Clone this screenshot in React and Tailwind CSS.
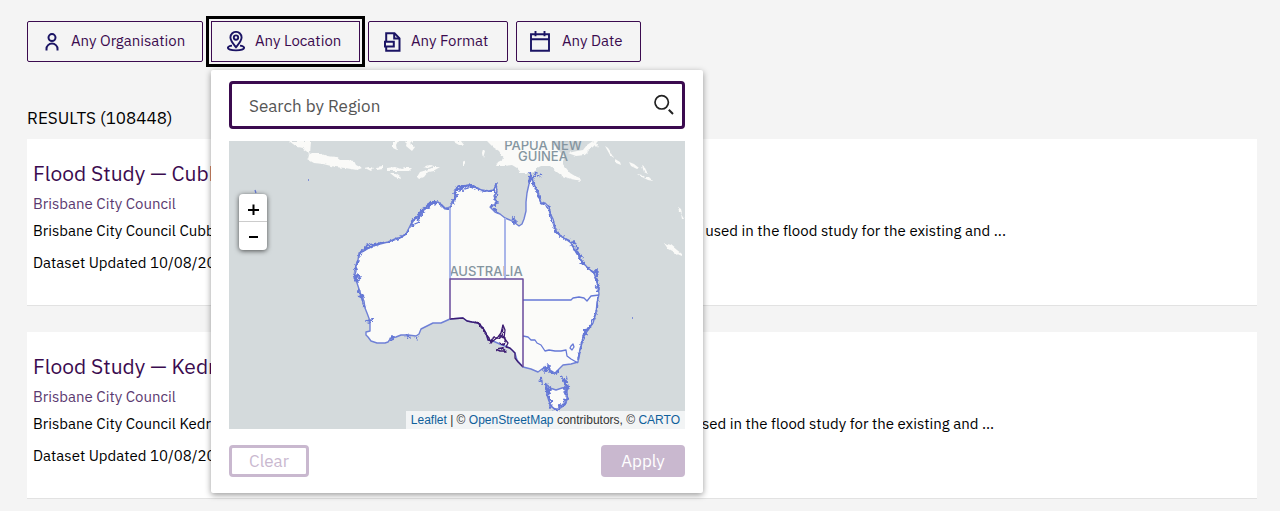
import { useState } from "react";

const results = [
  {
    id: 1,
    title: "Flood Study — Cubberla Creek",
    publisher: "Brisbane City Council",
    description:
      "Brisbane City Council Cubberla Creek Flood Study. This dataset is the hydraulic model files and data used in the flood study for the existing and ...",
    updated: "10/08/2020",
  },
  {
    id: 2,
    title: "Flood Study — Kedron Brook",
    publisher: "Brisbane City Council",
    description:
      "Brisbane City Council Kedron Brook Flood Study. This dataset is the hydraulic model files and data used in the flood study for the existing and ...",
    updated: "10/08/2020",
  },
];

function PersonIcon() {
  return (
    <svg width="14" height="18" viewBox="0 0 14 18" fill="none" stroke="#1b1464" strokeWidth="2">
      <circle cx="7" cy="4.600" r="3.500" />
      <path d="M1.500 17.500v-1.700a5.500 5.200 0 0 1 11 0v1.700" />
    </svg>
  );
}

function PinIcon() {
  return (
    <svg width="18" height="21" viewBox="0 0 18 21" fill="none" stroke="#1b1464" strokeWidth="1.900">
      <path d="M9 16.200C6 12.600 3.400 9.700 3.400 6.500a5.600 5.600 0 0 1 11.200 0c0 3.200-2.600 6.100-5.600 9.700z" />
      <circle cx="9" cy="6.600" r="2.200" />
      <path d="M5 14.600c-2.400.3-4.100 1.100-4.100 2.200 0 1.500 3.600 2.600 8.100 2.600s8.100-1.100 8.100-2.600c0-1.100-1.700-1.900-4.100-2.200" />
    </svg>
  );
}

function FileIcon() {
  return (
    <svg width="17" height="20" viewBox="0 0 17 20" fill="none" stroke="#1b1464" strokeWidth="2">
      <path d="M2.200 9.500V1.300h8.300l5 5v12.400H2.200V15" />
      <path d="M10.200 1.500v5h5" />
      <path d="M1 9.800h8.800v4.800H1z" />
    </svg>
  );
}

function CalendarIcon() {
  return (
    <svg width="20" height="21" viewBox="0 0 20 21" fill="none" stroke="#1b1464" strokeWidth="1.900">
      <path d="M1 3.200h18v16.600H1zM1 8.300h18M5.500 0v5.200M14.500 0v5.200" />
    </svg>
  );
}

function FilterButton({ icon: Icon, label, className, active, onClick }) {
  return (
    <button
      type="button"
      onClick={onClick}
      className={`flex h-[41px] items-center border border-[#3b0b4f] text-[15px] whitespace-nowrap text-[#3b0b4f] ${className} ${
        active ? "outline-3 outline-offset-2 outline-black" : "rounded-[2px]"
      }`}
    >
      <Icon />
      {label}
    </button>
  );
}

// mainland outline, clockwise from the WA/NT border
const mainland =
  "M450 208L452 203L456 197L455 192L458 186L463 187L468 185L473 187L478 188L483 191L488 191L494 190L496 184L497 192L494 196L497 203L490 207L495 212L500 214L505 218L510 220L515 223L519 226L522 224L524 219L526 211L526 202L527 193L529 184L531 177L534 184L537 191L539 197L541 203L545 203L549 207L550 213L553 219L555 227L556 232L562 237L567 240L571 243L574 249L578 253L580 259L584 264L589 269L594 273L596 279L598 286L599 294L597 303L596 313L593 323L588 330L583 338L581 346L579 354L578 362L571 364L563 365L559 369L555 373L550 370L545 367L542 369L538 372L531 369L523 367L517 360L515 353L512 350L508 347L502 345L493 341L488 340L486 333L483 328L478 323L472 322L467 321L463 318L450 319L441 323L433 323L427 326L421 329L419 334L416 336L408 335L401 335L396 337L391 338L388 342L385 343L377 343L371 341L368 337L366 335L366 332L370 331L370 326L370 321L367 313L365 308L364 301L361 295L359 289L357 283L354 278L356 271L356 265L358 260L359 253L364 251L369 248L373 246L380 244L388 242L395 239L402 237L406 234L408 230L411 224L415 219L420 214L425 209L428 205L433 202L438 202L442 205L445 209Z";

// stretches with many inlets, reefs and small islands
const frayed = [
  "M450 207L446 209L441 205L437 202L432 202L427 206L422 211L417 217L412 222L411 226L420 222L417 218L424 213L421 210L428 208L432 204L437 203",
  "M409 231L402 237L388 242L380 243L372 246L361 252L359 256L364 250L368 244L370 246L383 243",
  "M358 260L355 270L354 277L357 281L360 277L357 275L356 279L358 282L360 276",
  "M455 204L452 202L457 196L454 193L458 186L465 186L472 185L479 190L487 191L494 191L496 184L495 189L497 196L494 200L498 203L491 206L498 213",
  "M457 190L463 186L460 191L467 188L472 187L470 184L475 187",
  "M512 220L515 217L514 223L518 221L513 222",
  "M529 184L530 173L532 180L536 173M538 176L542 175M532 180L538 193L541 203L549 207L551 217L554 225L555 231L560 236L557 230",
  "M562 237L570 241L576 252L581 260L587 267L594 273L597 270L596 278L599 288L597 292M570 243L574 242L578 248L576 252L582 256L579 260L586 266M597 280L599 285L595 289",
  "M598 297L597 310L592 323L587 331L585 335L588 327L584 333L581 346L578 361",
  "M371 322L366 321L373 320M365 308L361 296L358 290L363 298L358 296",
  "M545 367L543 370L548 365L545 372L549 367L550 372L556 374L558 370",
  "M390 338L394 336L391 341M405 335L410 338L408 334M415 337L418 339",
  "M541 377L542 384L540 379M561 376L567 383L566 386L563 380L568 387L566 377",
];

const tasmania =
  "M546 384L550 388L556 390L562 388L567 387L567 393L567 400L565 404L562 407L559 409L555 409L551 406L549 401L547 395Z";

// Indonesia, New Guinea and the Pacific islands
const islands = [
  "M289 141l8 6 5 1 8 6 1-13z",
  "M308 155l4-2 7 0 8 3 9 1 4 3 8 0 6 1 2 4 6 3-5 2-12-2-10-1-12-3-9-1-7-4z",
  "M365 168l5-1 4 1-3 3zM376 167l7-1 0 3-6 1zM387 168l8-1 6 2 5-1 6 0-3 3-14 0-8 0z",
  "M390 173l6 0 4 3 1 3-6-2zM417 177l3-5 7-2 7-3 6 0-7 4-5 1-4 5-5 2zM423 167l7-2 3 1-5 2z",
  "M393 141l5 0-2 4 1 5-4-2zM407 141l6 0-3 3 5 3-3 4-6-5z",
  "M452 141l9 0 3 4-5 0zM463 160l3 2-3 4zM483 149l2 2-2 7-1-5z",
  "M487 141l66 0 2 6 7 7 3 3-3 6 8 10 5 3 5 2 1 3-10-2-9-3-12-10-9 0-4 2-2 4-8 1-6 0-4-5-5-3-8 1-8 0 2-4 6-3-5-8-6-4z",
  "M568 153l9-2 6-1 4-5 6-4 5 0-5 6-5 3-3 5-9 1zM594 141l4 3-1 3-4-4z",
  "M605 146l3 2 4 6 2 4-4-3zM615 159l5 3 1 3-5-2zM629 162l5 2 5 4-2 1-6-3zM642 166l3 2 3 6-4-2zM637 174l5 1 3 2 4 0 4 4-5-1-8-4z",
  "M678 207l3 2 1 4-3-2zM681 214l3 5-2 0zM664 243l7 2 6 5 5 4 0 2-7-3-7-4z",
];

function RegionMap() {
  return (
    <svg
      viewBox="229 141 456 288"
      className="block w-full bg-[#d4dadc]"
      role="img"
      aria-label="Map of Australia"
      strokeLinejoin="round"
    >
      <defs>
        <filter id="ragged" x="-5%" y="-5%" width="110%" height="110%">
          <feTurbulence type="fractalNoise" baseFrequency="0.35" numOctaves="2" seed="4" />
          <feDisplacementMap in="SourceGraphic" scale="5" xChannelSelector="R" yChannelSelector="G" />
        </filter>
        <filter id="uneven" x="-5%" y="-5%" width="110%" height="110%">
          <feTurbulence type="fractalNoise" baseFrequency="0.2" numOctaves="2" seed="9" />
          <feDisplacementMap in="SourceGraphic" scale="3" xChannelSelector="R" yChannelSelector="G" />
        </filter>
      </defs>

      <g fill="#fafaf8" filter="url(#uneven)">
        {islands.map((d) => (
          <path key={d} d={d} />
        ))}
      </g>
      <path d={mainland} fill="#fbfbf9" stroke="#6f80d6" strokeWidth="1.400" />
      <path d={tasmania} fill="#fbfbf9" stroke="#6f80d6" strokeWidth="1.500" />
      <g fill="none" stroke="#6578d6" strokeWidth="1.800" filter="url(#ragged)">
        {frayed.map((d) => (
          <path key={d} d={d} />
        ))}
        <path
          strokeWidth="2.200"
          d="M546 383L547 390L550 388L548 397L551 401L550 406L555 410L560 410L559 405L564 406L565 400L568 399L565 393L568 387L564 389M545 386L548 394"
        />
      </g>
      <g fill="none" stroke="#6578d6" strokeWidth="1.300">
        <path d="M523 300h48l2-2 6-1 5 1 3 3 4-5 8-1" />
        <path d="M523 336l5 1 3 3 4 0 2 3 4 2 4 6 4-1 6 1 6 0 5-1 1 6 4 3 7 4" />
        <path d="M571 346l2-2 1 3-2 3-2-2z" />
        <path d="M255 190l1 3M308 180h1M632 318h1" />
      </g>
      <g fill="#8495a0" fontFamily="Inter, sans-serif" fontSize="13" fontWeight="500" textAnchor="middle">
        <text x="543" y="150">PAPUA NEW</text>
        <text x="543" y="161">GUINEA</text>
        <text x="486" y="276">AUSTRALIA</text>
      </g>
      <path d="M450 208v71M505 218v61" fill="none" stroke="#a9b5e9" strokeWidth="2" />

      {/* South Australia, the selected region */}
      <g fill="none" stroke="#3d1c72">
        <path
          strokeWidth="1.300"
          d="M450 319L463 318L467 321L472 322L478 323L483 328L486 333L488 340L493 341L498 337L501 333L503 325L505 330L504 338L508 343L506 347L510 348L515 353L515 358L518 362L523 367"
        />
        <path
          strokeWidth="1.500"
          filter="url(#uneven)"
          d="M475 322L480 324L482 328L485 333L489 338L490 343L494 338L499 338L502 334M503 326L502 336L506 338L504 345L500 343M496 349L502 348L506 351L500 351L496 349"
        />
        <path d="M450 319v-40h73v88" stroke="#6a4b9c" strokeWidth="1.500" />
      </g>
    </svg>
  );
}

function LocationPanel() {
  const [region, setRegion] = useState("");

  return (
    <div className="absolute top-full left-0 z-10 mt-2 w-[492px] rounded-[2px] bg-white px-[18px] pt-[11px] pb-4 shadow-[0_2px_6px_rgba(0,0,0,0.4)]">
      {/* Region search */}
      <div className="flex h-12 items-center rounded-[4px] border-3 border-[#3b0b4f] pr-2 pl-[17px]">
        <input
          type="text"
          aria-label="Search by Region"
          placeholder="Search by Region"
          value={region}
          onChange={(e) => setRegion(e.target.value)}
          className="min-w-0 flex-1 bg-transparent pt-1 text-[17px] text-[#333333] outline-none placeholder:text-[#555555]"
        />
        <svg width="22" height="22" viewBox="0 0 22 22" fill="none" stroke="#222222" strokeWidth="1.700">
          <circle cx="9.700" cy="8.300" r="6.700" />
          <path d="M16.800 15.800l4.200 4.200" strokeWidth="2" />
        </svg>
      </div>

      {/* Map */}
      <div className="relative mt-3">
        <RegionMap />
        <div className="absolute top-[53px] left-2.5 flex w-7 flex-col overflow-hidden rounded-[4px] bg-white shadow-[0_1px_5px_rgba(0,0,0,0.65)]">
          <button
            type="button"
            aria-label="Zoom in"
            className="flex h-7 items-center justify-center border-b border-[#cccccc]"
          >
            <svg width="14" height="14" viewBox="0 0 14 14" stroke="#000000" strokeWidth="2">
              <path d="M2 9h11M7.500 3.500v11" />
            </svg>
          </button>
          <button type="button" aria-label="Zoom out" className="flex h-7 items-center justify-center">
            <svg width="14" height="14" viewBox="0 0 14 14" stroke="#000000" strokeWidth="2">
              <path d="M3 8h9" />
            </svg>
          </button>
        </div>
        <div className="absolute right-0 bottom-0 bg-white/70 px-[5px] font-['Liberation_Sans',sans-serif] text-xs leading-[18px] whitespace-nowrap text-[#333333]">
          <a href="https://leafletjs.com" className="text-[#0f609b]">Leaflet</a> | ©{" "}
          <a href="https://www.openstreetmap.org/copyright" className="text-[#0f609b]">OpenStreetMap</a>{" "}
          contributors, © <a href="https://carto.com/attributions" className="text-[#0f609b]">CARTO</a>
        </div>
      </div>

      {/* Actions */}
      <div className="mt-4 flex justify-between text-[17px]">
        <button
          type="button"
          onClick={() => setRegion("")}
          className="h-8 w-20 rounded-[4px] border-3 border-[#c9b8cf] leading-none text-[#c9b8cf]"
        >
          Clear
        </button>
        <button type="button" className="h-8 w-[84px] rounded-[4px] bg-[#c9b8cf] leading-none text-white">
          Apply
        </button>
      </div>
    </div>
  );
}

function ResultCard({ title, publisher, description, updated }) {
  return (
    <article className="border-b border-[#e2e2e2] bg-white px-1.5 pt-5 pb-8 text-[15px] leading-5 text-black">
      <h2 className="text-[21px] leading-[29px] text-[#3b0b4f]">
        <a href="#dataset">{title}</a>
      </h2>
      <p className="mt-1.5 text-[#5b3a70]">{publisher}</p>
      <p className="mt-[7px] truncate">{description}</p>
      <p className="mt-3">Dataset Updated {updated}</p>
    </article>
  );
}

export default function App() {
  const [open, setOpen] = useState(true);

  return (
    <main className="min-h-screen overflow-hidden bg-[#f4f4f4] pt-[21px] pr-[23px] pl-[27px] font-['IBM_Plex_Sans',Roboto,sans-serif]">
      <div className="flex gap-2">
        <FilterButton icon={PersonIcon} label="Any Organisation" className="w-44 gap-3 pl-[17px]" />
        <div className="relative">
          <FilterButton
            icon={PinIcon}
            label="Any Location"
            className="w-[149px] gap-2.5 pl-[15px]"
            active={open}
            onClick={() => setOpen(!open)}
          />
          {open && <LocationPanel />}
        </div>
        <FilterButton icon={FileIcon} label="Any Format" className="w-[140px] gap-2.5 pl-[15px]" />
        <FilterButton icon={CalendarIcon} label="Any Date" className="w-[125px] gap-3 pl-[13px]" />
      </div>

      <h1 className="mt-11 text-[17px] leading-6 text-black">RESULTS (108448)</h1>
      <div className="mt-[9px] flex flex-col gap-[26px]">
        {results.map((result) => (
          <ResultCard key={result.id} {...result} />
        ))}
      </div>
    </main>
  );
}
